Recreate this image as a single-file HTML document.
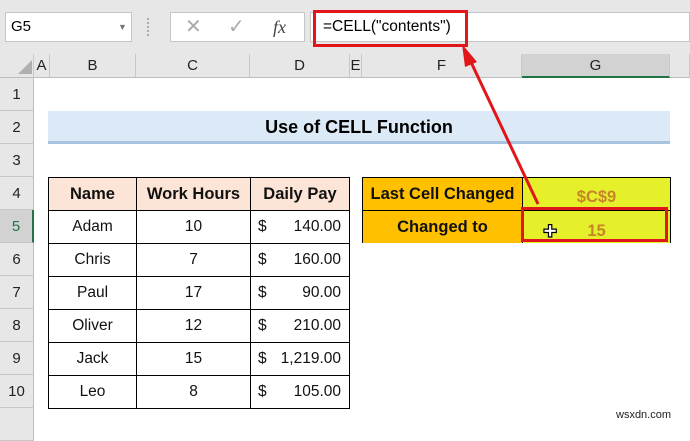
<!DOCTYPE html><html><head><style>
body{margin:0;width:690px;height:423px;overflow:hidden;background:#fff;font-family:"Liberation Sans",sans-serif;position:relative}
div{position:absolute;box-sizing:border-box}
.top{left:0;top:0;width:690px;height:54px;background:#e7e7e7}
.ch{top:54px;height:24px;background:#e7e7e7;border-right:1px solid #c8c8c8;border-bottom:1px solid #bdbdbd;text-align:center;font-size:15px;line-height:24px;color:#222}
.rh{left:0;width:34px;height:33px;background:#e7e7e7;border-bottom:1px solid #c8c8c8;border-right:1px solid #bdbdbd;text-align:center;font-size:15px;line-height:33px;color:#222}
.c{height:34px;border:1px solid #000;text-align:center;font-size:15.5px;line-height:32px;color:#111}
.b{font-weight:bold;font-size:16.5px}
</style></head><body>
<div class="top"></div>
<div style="left:5px;top:12px;width:127px;height:30px;background:#fff;border:1px solid #c6c6c6;font-size:15px;line-height:28px;padding-left:5px">G5<span style="position:absolute;left:112px;font-size:9px;color:#777">▼</span></div>
<div style="left:147px;top:18px;width:2px;height:18px;border-left:2px dotted #aaa"></div>
<div style="left:170px;top:12px;width:135px;height:30px;background:#fff;border:1px solid #c6c6c6;color:#aaa;font-size:20px;line-height:28px"><span style="position:absolute;left:14px">✕</span><span style="position:absolute;left:57px">✓</span><span style="position:absolute;left:102px;color:#444;font-family:'Liberation Serif',serif;font-style:italic;font-size:18px">fx</span></div>
<div style="left:310px;top:12px;width:380px;height:30px;background:#fff;border:1px solid #c6c6c6;font-size:15.5px;line-height:28px;padding-left:12px">=CELL("contents")</div>
<div style="left:313px;top:10px;width:155px;height:37px;border:3px solid #e0161b"></div>
<div class="ch" style="left:0;width:34px"></div>
<div style="left:18px;top:60px;width:0;height:0;border-left:14px solid transparent;border-bottom:14px solid #b0b0b0"></div>
<div class="ch" style="left:34px;width:16px">A</div>
<div class="ch" style="left:50px;width:86px">B</div>
<div class="ch" style="left:136px;width:114px">C</div>
<div class="ch" style="left:250px;width:100px">D</div>
<div class="ch" style="left:350px;width:12px">E</div>
<div class="ch" style="left:362px;width:160px">F</div>
<div class="ch" style="left:522px;width:148px;background:#d2d2d2;border-bottom:2px solid #217346">G</div>
<div class="ch" style="left:670px;width:20px"></div>
<div class="rh" style="top:78px">1</div><div class="rh" style="top:111px">2</div><div class="rh" style="top:144px">3</div><div class="rh" style="top:177px">4</div>
<div class="rh" style="top:210px;background:#d2d2d2;border-right:2px solid #217346;color:#217346">5</div>
<div class="rh" style="top:243px">6</div><div class="rh" style="top:276px">7</div><div class="rh" style="top:309px">8</div><div class="rh" style="top:342px">9</div><div class="rh" style="top:375px">10</div><div class="rh" style="top:408px"></div>
<div style="left:48px;top:111px;width:622px;height:33px;background:#dce9f6;border-bottom:3px solid #a9c3e0;text-align:center;font-weight:bold;font-size:18px;line-height:32px">Use of CELL Function</div>
<div class="c b" style="left:48px;top:177px;width:89px;background:#fce4d6">Name</div>
<div class="c b" style="left:136px;top:177px;width:115px;background:#fce4d6">Work Hours</div>
<div class="c b" style="left:250px;top:177px;width:100px;background:#fce4d6">Daily Pay</div>
<div class="c" style="left:48px;top:210px;width:89px">Adam</div><div class="c" style="left:136px;top:210px;width:115px">10</div><div class="c" style="left:250px;top:210px;width:100px;text-align:right;padding-right:8px"><span style="position:absolute;left:7px">$</span>140.00</div>
<div class="c" style="left:48px;top:243px;width:89px">Chris</div><div class="c" style="left:136px;top:243px;width:115px">7</div><div class="c" style="left:250px;top:243px;width:100px;text-align:right;padding-right:8px"><span style="position:absolute;left:7px">$</span>160.00</div>
<div class="c" style="left:48px;top:276px;width:89px">Paul</div><div class="c" style="left:136px;top:276px;width:115px">17</div><div class="c" style="left:250px;top:276px;width:100px;text-align:right;padding-right:8px"><span style="position:absolute;left:7px">$</span>90.00</div>
<div class="c" style="left:48px;top:309px;width:89px">Oliver</div><div class="c" style="left:136px;top:309px;width:115px">12</div><div class="c" style="left:250px;top:309px;width:100px;text-align:right;padding-right:8px"><span style="position:absolute;left:7px">$</span>210.00</div>
<div class="c" style="left:48px;top:342px;width:89px">Jack</div><div class="c" style="left:136px;top:342px;width:115px">15</div><div class="c" style="left:250px;top:342px;width:100px;text-align:right;padding-right:8px"><span style="position:absolute;left:7px">$</span>1,219.00</div>
<div class="c" style="left:48px;top:375px;width:89px">Leo</div><div class="c" style="left:136px;top:375px;width:115px">8</div><div class="c" style="left:250px;top:375px;width:100px;text-align:right;padding-right:8px"><span style="position:absolute;left:7px">$</span>105.00</div>
<div class="c b" style="left:362px;top:177px;width:161px;background:#ffc000">Last Cell Changed</div>
<div class="c b" style="left:522px;top:177px;width:149px;background:#e6f02a;color:#c5852a;line-height:38px">$C$9</div>
<div class="c b" style="left:362px;top:210px;width:161px;height:33px;background:#ffc000;border-bottom:none">Changed to</div>
<div class="c b" style="left:522px;top:210px;width:149px;height:33px;background:#e6f02a;color:#c5852a;border-bottom:none;line-height:40px">15</div>
<div style="left:521px;top:207px;width:147px;height:35px;border:3px solid #e0161b"></div>
<div style="left:543px;top:222px;font-size:17px;color:#fff;-webkit-text-stroke:1.2px #000">✚</div>
<svg style="position:absolute;left:0;top:0" width="690" height="423"><line x1="538" y1="204" x2="470" y2="60" stroke="#e0161b" stroke-width="3"/><polygon points="462,44 477,62 465,67" fill="#e0161b"/></svg>
<div style="left:616px;top:409px;font-size:11px;color:#222">wsxdn.com</div>
</body></html>
